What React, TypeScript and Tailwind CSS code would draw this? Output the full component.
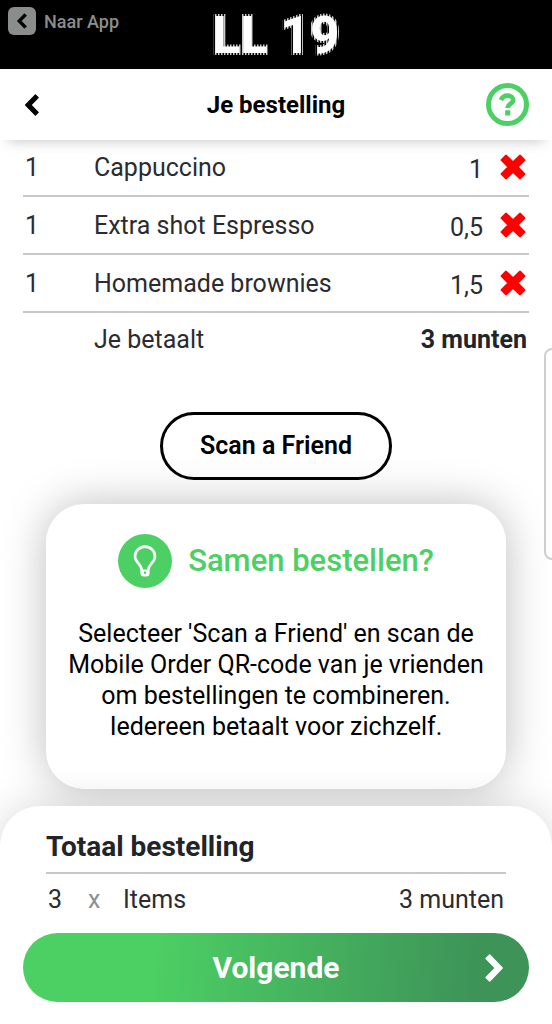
type OrderLine = {
  amount: number;
  name: string;
  price: string;
};

const orderLines: OrderLine[] = [
  { amount: 1, name: "Cappuccino", price: "1" },
  { amount: 1, name: "Extra shot Espresso", price: "0,5" },
  { amount: 1, name: "Homemade brownies", price: "1,5" },
];

function Logo() {
  return (
    <svg
      className="h-[68px] w-[140px]"
      viewBox="0 0 140 68"
      role="img"
      aria-label="LL 19"
    >
      <defs>
        <pattern id="comb" width="3" height="68" patternUnits="userSpaceOnUse">
          <rect width="1.500" height="68" fill="#ccc" />
        </pattern>
      </defs>
      <text
        x="70"
        y="53"
        textAnchor="middle"
        fill="#fff"
        stroke="url(#comb)"
        strokeWidth="4"
        strokeLinejoin="miter"
        paintOrder="stroke"
        className="font-['Roboto',sans-serif] text-[51px] font-extrabold"
      >
        LL 19
      </text>
    </svg>
  );
}

function Chevron({ className }: { className: string }) {
  return (
    <svg
      className={className}
      viewBox="0 0 14 22"
      fill="currentColor"
      stroke="currentColor"
      strokeWidth="1.200"
      strokeLinejoin="round"
      aria-hidden="true"
    >
      <path d="M10.400 0.800 13.200 3.600 5.900 11 13.200 18.400 10.400 21.200 0.600 11z" />
    </svg>
  );
}

function CrossIcon() {
  return (
    <svg
      className="h-[26px] w-[26px]"
      viewBox="0 0 26 26"
      fill="currentColor"
      stroke="currentColor"
      strokeWidth="2.400"
      strokeLinejoin="round"
      aria-hidden="true"
    >
      <path d="M6 1.800 13 8.600 20 1.800 24.200 6 17.400 13 24.200 20 20 24.200 13 17.400 6 24.200 1.800 20 8.600 13 1.800 6z" />
    </svg>
  );
}

function QuestionIcon() {
  return (
    <svg className="h-[23px] w-[17px]" viewBox="0 0 17 23" aria-hidden="true">
      <path
        d="M2 7C3.200 4.200 5.400 2.600 8.400 2.600c3.400 0 5.800 1.800 5.800 4.400 0 3.800-5.500 3.600-5.500 8"
        fill="none"
        stroke="currentColor"
        strokeWidth="4.600"
      />
      <rect x="6.100" y="17.200" width="5.200" height="5.200" rx="0.600" fill="currentColor" />
    </svg>
  );
}

function BulbIcon() {
  return (
    <svg
      className="h-8 w-6"
      viewBox="0 0 24 32"
      fill="none"
      stroke="#fff"
      strokeWidth="2.600"
      strokeLinejoin="round"
      aria-hidden="true"
    >
      <path d="M8.700 25C8.700 19 2 17.600 2 11.400a10 9.800 0 0 1 20 0C22 17.600 15.300 19 15.300 25" />
      <path
        d="M7.400 24.500h9.200v3.500a3.500 3.500 0 0 1-3.500 3.500h-2.200a3.500 3.500 0 0 1-3.500-3.500z"
        fill="#fff"
        stroke="none"
      />
      <circle cx="12" cy="27.800" r="1.300" fill="#4cd063" stroke="none" />
    </svg>
  );
}

function OrderTable() {
  return (
    <table className="w-full text-[25px] text-[#2b2b30]">
      <tbody>
        {orderLines.map((line) => (
          <tr key={line.name} className="h-[58px] border-b-2 border-[#c8c8c8]">
            <td className="w-[71px] pt-0.5 pl-0.5">{line.amount}</td>
            <td className="pt-0.5">{line.name}</td>
            <td className="pt-1.5 text-right">{line.price}</td>
            <td className="w-[46px]">
              <button
                type="button"
                aria-label={`Verwijder ${line.name}`}
                className="flex w-full justify-end pr-[3px] text-[#ff0000]"
              >
                <CrossIcon />
              </button>
            </td>
          </tr>
        ))}
      </tbody>
      <tfoot>
        <tr className="h-[54px]">
          <td></td>
          <td>Je betaalt</td>
          <td colSpan={2} className="pr-0.5 text-right font-bold text-[#212529]">
            3 munten
          </td>
        </tr>
      </tfoot>
    </table>
  );
}

export default function App() {
  return (
    <div className="relative flex min-h-screen flex-col overflow-hidden bg-white font-['Roboto',sans-serif] text-black">
      {/* Brand bar */}
      <header className="grid h-[69px] grid-cols-[1fr_auto_1fr] bg-black">
        <a
          href="#app"
          className="mt-[7px] ml-2 flex h-7 items-center gap-2 text-[18px] font-medium text-[#8b8d8c]"
        >
          <span className="flex h-7 w-7 items-center justify-center rounded-md bg-[#8b8d8c] text-black">
            <Chevron className="h-4 w-[10px]" />
          </span>
          Naar App
        </a>
        <Logo />
      </header>

      {/* Page title */}
      <nav className="relative z-10 flex h-[71px] items-center justify-between bg-white px-[23px] shadow-[0_10px_12px_-8px_rgba(0,0,0,0.2)]">
        <button type="button" aria-label="Terug" className="w-[43px] pl-0.5">
          <Chevron className="h-[22px] w-[14px]" />
        </button>
        <h1 className="text-[24px] font-bold">Je bestelling</h1>
        <button
          type="button"
          aria-label="Help"
          className="flex h-[43px] w-[43px] items-center justify-center rounded-full border-5 border-[#4cd063] text-[#4cd063]"
        >
          <QuestionIcon />
        </button>
      </nav>

      <main className="-mt-0.5 flex flex-1 flex-col items-center px-[23px]">
        <OrderTable />

        <button
          type="button"
          className="mt-[46px] h-[68px] rounded-full border-3 border-black px-[37px] text-[25px] font-semibold"
        >
          Scan a Friend
        </button>

        {/* Tip */}
        <section className="mt-6 mb-4 w-[calc(100%-46px)] rounded-[38px] bg-white px-5 pt-[30px] pb-[47px] text-center shadow-[0_0_44px_rgba(0,0,0,0.26)]">
          <div className="flex items-center justify-center gap-4">
            <span className="flex h-[54px] w-[54px] items-center justify-center rounded-full bg-[#4cd063]">
              <BulbIcon />
            </span>
            <h2 className="text-[31px] font-medium text-[#4cd063]">
              Samen bestellen?
            </h2>
          </div>
          <p className="mt-[30px] text-[25px] leading-[31px]">
            Selecteer 'Scan a Friend' en scan de Mobile Order QR-code van je
            vrienden om bestellingen te combineren. Iedereen betaalt voor
            zichzelf.
          </p>
        </section>
      </main>

      {/* Drawer handle that peeks in from the right */}
      <div
        className="absolute top-[348px] -right-2 h-[212px] w-4 rounded-lg border-2 border-[#cfcfcf] bg-white"
        aria-hidden="true"
      ></div>

      {/* Order total */}
      <footer className="relative rounded-t-[40px] bg-white px-[23px] pt-6 pb-[22px] shadow-[0_0_40px_rgba(0,0,0,0.16)]">
        <div className="px-[23px] text-[25px] text-[#2b2b30]">
          <h2 className="border-b-2 border-[#c8c8c8] pb-2 text-[28px] leading-[34px] font-bold text-[#212529]">
            Totaal bestelling
          </h2>
          <div className="flex h-[59px] items-center px-0.5 pb-2">
            <span className="w-10">3</span>
            <span className="w-[35px] text-[#8b8f94]">x</span>
            <span>Items</span>
            <span className="ml-auto">3 munten</span>
          </div>
        </div>
        <button
          type="button"
          className="grid h-[69px] w-full grid-cols-[1fr_auto_1fr] items-center rounded-full bg-linear-95 from-[#4cd063] from-25% to-[#3d9358] to-90% px-[26px] text-[30px] font-bold text-white"
        >
          <span></span>
          Volgende
          <Chevron className="h-7 w-[18px] rotate-180 justify-self-end" />
        </button>
      </footer>
    </div>
  );
}
